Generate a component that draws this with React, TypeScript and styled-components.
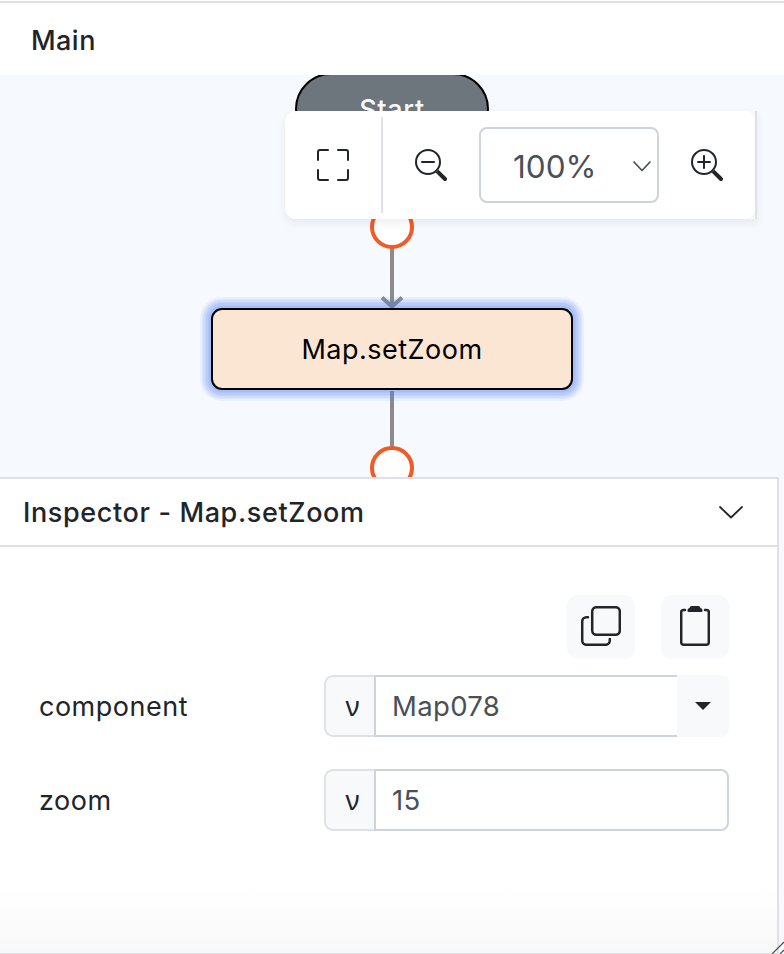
import React from "react";
import styled, { createGlobalStyle } from "styled-components";
import { BsFullscreen, BsZoomIn, BsZoomOut } from "react-icons/bs";

const GlobalStyle = createGlobalStyle`
  *, *::before, *::after { box-sizing: border-box; }
  body {
    margin: 0;
    background: #f6f9fe;
    color: #212529;
    font-family: Inter, "Liberation Sans", sans-serif;
    font-size: 27px;
  }
`;

const Page = styled.div`
  display: flex;
  flex-direction: column;
  height: 954px;
  overflow: hidden;
  padding-top: 1px;
  background: #fff;
`;

const Header = styled.header`
  display: flex;
  align-items: center;
  flex: none;
  height: 74px;
  padding: 2px 31px 0;
  border-top: 2px solid #dee2e6;
  background: #fff;
  font-weight: 500;
  letter-spacing: 0.45px;
`;

const Canvas = styled.main`
  position: relative;
  flex: none;
  height: 402px;
  overflow: hidden;
  background: #f6f9fe;
`;

const Flow = styled.svg`
  position: absolute;
  left: 0;
  top: 0;
`;

const StartNode = styled.div`
  position: absolute;
  left: 295px;
  top: -2px;
  width: 194px;
  height: 72px;
  display: grid;
  place-items: center;
  border: 2px solid #000;
  border-radius: 36px;
  background: #6d757d;
  color: #f8f9fa;
  font-weight: 450;
  letter-spacing: 0.7px;
`;

const MethodNode = styled.div`
  position: absolute;
  left: 211px;
  top: 233px;
  width: 362px;
  height: 82px;
  display: grid;
  place-items: center;
  border: 2px solid #000;
  border-radius: 11px;
  background: #fbe6d4;
  color: #000;
  letter-spacing: 0.5px;
  box-shadow:
    0 0 0 2px rgba(77, 126, 245, 0.09),
    0 0 0 3px rgba(77, 126, 245, 0.08),
    0 0 0 5px rgba(77, 126, 245, 0.09),
    0 0 0 6px rgba(77, 126, 245, 0.09),
    0 0 0 8px rgba(77, 126, 245, 0.09),
    0 0 0 9px rgba(77, 126, 245, 0.07),
    0 0 0 11px rgba(77, 126, 245, 0.08);
`;

const Toolbar = styled.div`
  position: absolute;
  left: 285px;
  top: 36px;
  width: 472px;
  height: 108px;
  display: flex;
  align-items: center;
  border-radius: 11px 0 0 11px;
  box-shadow: 0 4px 8px rgba(33, 37, 41, 0.08);
  border-right: 2px solid #dee2e6;
  background: #f6f9fe;
`;

const ToolbarFace = styled.div`
  display: flex;
  align-items: center;
  width: 100%;
  height: 100%;
  border-radius: 11px;
  background: #fff;
`;

const ToolButton = styled.button<{ $width: number }>`
  display: grid;
  place-items: center;
  width: ${(p) => p.$width}px;
  height: 96px;
  padding: 0;
  border: 0;
  background: none;
  color: #212529;
  svg { display: block; width: 32px; height: 32px; }
`;

const Divider = styled.div`
  width: 2px;
  height: 96px;
  background: #dee2e6;
`;

const ZoomSelect = styled.div`
  display: flex;
  align-items: center;
  justify-content: space-between;
  width: 180px;
  height: 76px;
  padding: 2px 6px 0 32px;
  border: 2px solid #ced4da;
  border-radius: 8px;
  color: #495057;
  font-size: 31.5px;
`;

const Inspector = styled.section`
  display: flex;
  flex-direction: column;
  flex: none;
  height: 477px;
  border-right: 5px solid #f6f9fe;
  background: linear-gradient(#fff 86%, #f8f8f8);
`;

const Panel = styled.div`
  flex: 1;
  border: solid #dee2e6;
  border-width: 2px 2px 1px 0;
`;

const InspectorHeader = styled.div`
  display: flex;
  align-items: center;
  justify-content: space-between;
  height: 68px;
  padding: 0 34px 0 23px;
  border-bottom: 2px solid #dee2e6;
  font-weight: 500;
  letter-spacing: 0.63px;
`;

const InspectorBody = styled.div`
  display: flex;
  flex-direction: column;
  padding: 48px 48px 0 39px;
`;

const Actions = styled.div`
  display: flex;
  justify-content: flex-end;
  gap: 26px;
  margin-bottom: 16px;
`;

const ActionButton = styled.button`
  display: grid;
  place-items: center;
  width: 68px;
  height: 64px;
  padding: 0 0 2px;
  border: 0;
  border-radius: 11px;
  background: #f8f9fa;
  color: #212529;
`;

const FieldRow = styled.div`
  display: grid;
  grid-template-columns: 285px 405px;
  align-items: center;
  height: 62px;
  margin-bottom: 32px;
`;

const Label = styled.label`
  letter-spacing: 0.5px;
`;

const InputGroup = styled.div`
  display: flex;
  height: 62px;
`;

const Prefix = styled.span`
  display: grid;
  place-items: center;
  width: 50px;
  padding-left: 5px;
  border: 2px solid #dee2e6;
  border-right: 0;
  border-radius: 9px 0 0 9px;
  background: #f8f9fa;
  font-family: "Noto Sans", Inter, sans-serif;
  font-size: 27px;
  line-height: 34px;
`;

const Value = styled.div<{ $joined?: boolean }>`
  display: flex;
  flex: 1;
  align-items: center;
  padding-left: 16px;
  border: 2px solid #ced4da;
  border-right-width: ${(p) => (p.$joined ? 0 : 2)}px;
  border-radius: ${(p) => (p.$joined ? "0" : "0 8px 8px 0")};
  background: #fff;
  color: #495057;
  font-size: 27.5px;
  letter-spacing: 0.35px;
`;

const DropButton = styled.button`
  display: grid;
  place-items: center;
  width: 52px;
  padding: 0;
  border: 0;
  border-radius: 0 8px 8px 0;
  background: #f8f9fa;
`;

const ResizeGrip = styled.svg`
  position: absolute;
  left: 770px;
  top: 940px;
`;

function Chevron({ width, height, stroke }: { width: number; height: number; stroke: number }) {
  return (
    <svg width={width} height={height} viewBox={`0 0 ${width} ${height}`} fill="none">
      <path
        d={`M1 1 L${width / 2} ${height - 1.5} L${width - 1} 1`}
        stroke="currentColor"
        strokeWidth={stroke}
        strokeLinecap="round"
        strokeLinejoin="round"
      />
    </svg>
  );
}

function CopyIcon() {
  return (
    <svg width="40" height="40" viewBox="0 0 40 40" fill="none" stroke="currentColor" strokeWidth="2.5" strokeLinecap="round">
      <rect x="11.2" y="1.2" width="27.6" height="27.6" rx="4.2" />
      <path d="M7 11.2H5.5A4.3 4.3 0 0 0 1.2 15.5V34.5A4.3 4.3 0 0 0 5.5 38.8H24.5A4.3 4.3 0 0 0 28.8 34.5V33" />
    </svg>
  );
}

function ClipboardIcon() {
  return (
    <svg width="30" height="40" viewBox="0 0 30 40" fill="none">
      <path
        d="M5 4H3.4A2.2 2.2 0 0 0 1.2 6.2V36.2A2.6 2.6 0 0 0 3.8 38.8H26.2A2.6 2.6 0 0 0 28.8 36.2V6.2A2.2 2.2 0 0 0 26.6 4H25"
        stroke="currentColor"
        strokeWidth="2.5"
        strokeLinecap="round"
      />
      <path d="M11.5 0H18.5Q20 0 20.5 2Q22.5 2.3 22.5 4V5Q22.5 6 21.5 6H8.5Q7.5 6 7.5 5V4Q7.5 2.3 9.5 2Q10 0 11.5 0Z" fill="currentColor" />
    </svg>
  );
}

function ConnectionLines() {
  return (
    <Flow width="784" height="402" viewBox="0 0 784 402" fill="none">
      <path d="M392 152V233M392 316V393" stroke="#8b8b8b" strokeWidth="4" />
      <path d="M382 222.5L392 231.5L402 222.5" stroke="#8b8b8b" strokeWidth="4" />
      <circle cx="392" cy="152" r="20" fill="#fff" stroke="#ef5a29" strokeWidth="4" />
      <circle cx="392" cy="393" r="20" fill="#fff" stroke="#ef5a29" strokeWidth="4" />
    </Flow>
  );
}

export default function App() {
  return (
    <>
      <GlobalStyle />
      <Page>
        <Header>Main</Header>
        <Canvas>
          <ConnectionLines />
          <StartNode>Start</StartNode>
          <MethodNode>Map.setZoom</MethodNode>
          <Toolbar>
            <ToolbarFace>
              <ToolButton $width={96} aria-label="Fit to screen"><BsFullscreen /></ToolButton>
              <Divider />
              <ToolButton $width={96} aria-label="Zoom out"><BsZoomOut /></ToolButton>
              <ZoomSelect>
                <span>100%</span>
                <Chevron width={18} height={11} stroke={1.7} />
              </ZoomSelect>
              <ToolButton $width={96} aria-label="Zoom in"><BsZoomIn /></ToolButton>
            </ToolbarFace>
          </Toolbar>
        </Canvas>
        <Inspector>
          <Panel>
            <InspectorHeader>
              <span>Inspector - Map.setZoom</span>
              <Chevron width={24} height={13} stroke={1.8} />
            </InspectorHeader>
            <InspectorBody>
              <Actions>
                <ActionButton aria-label="Copy"><CopyIcon /></ActionButton>
                <ActionButton aria-label="Paste"><ClipboardIcon /></ActionButton>
              </Actions>
              <FieldRow>
                <Label>component</Label>
                <InputGroup>
                  <Prefix>ν</Prefix>
                  <Value $joined>Map078</Value>
                  <DropButton aria-label="Choose component">
                    <svg width="16" height="8" viewBox="0 0 16 8"><path d="M0 0H16L8 8Z" fill="#212529" /></svg>
                  </DropButton>
                </InputGroup>
              </FieldRow>
              <FieldRow>
                <Label>zoom</Label>
                <InputGroup>
                  <Prefix>ν</Prefix>
                  <Value>15</Value>
                </InputGroup>
              </FieldRow>
            </InspectorBody>
          </Panel>
        </Inspector>
        <ResizeGrip width="14" height="14" viewBox="0 0 14 14" stroke="#55585b" strokeWidth="1.3">
          <path d="M2 14L14 2M10 14L14 10" />
        </ResizeGrip>
      </Page>
    </>
  );
}
